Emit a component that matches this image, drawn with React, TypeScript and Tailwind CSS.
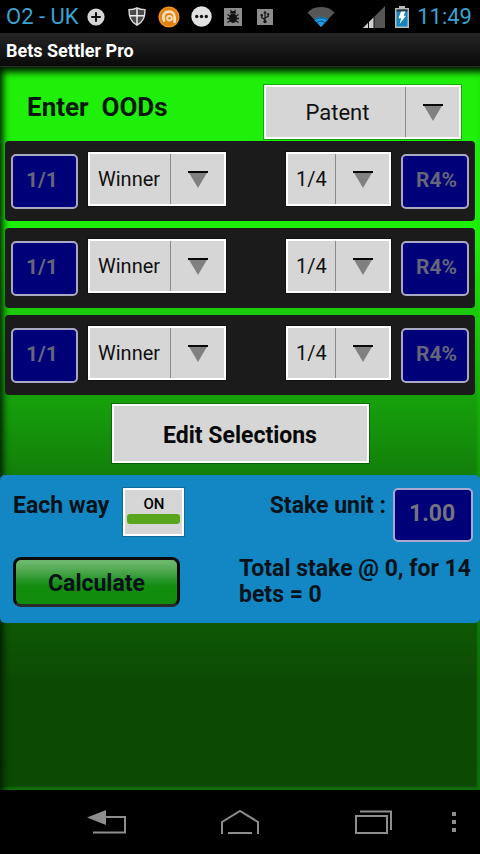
import {useState} from "react";
import clsx from "clsx";

function StatusIcons() {
    return (
        <div className="flex items-center">
            <svg className="mr-4 size-[18px]" viewBox="0 0 18 18">
                <circle cx="9" cy="9" r="8.6" fill="#d6d6d6"/>
                <path d="M9 4.2v9.6M4.2 9h9.6" stroke="#111" strokeWidth="2"/>
            </svg>
            <div className="flex w-8 justify-center">
                <svg className="h-[19px] w-[18px]" viewBox="0 0 18 19">
                    <path d="M1 2.6C4 2.6 7 2 9 .8c2 1.2 5 1.8 8 1.8 0 7.4-1.5 12-8 15.6C2.5 14.6 1 10 1 2.600Z" fill="#4a4a4a" stroke="#dcdcdc" strokeWidth="1.4"/>
                    <path d="M9 1.5v16.2M1.5 8.800h15" stroke="#efefef" strokeWidth="1.5"/>
                </svg>
            </div>
            <div className="flex w-8 justify-center">
                <svg className="size-[22px]" viewBox="0 0 22 22">
                    <circle cx="11" cy="11" r="10.6" fill="#e0800f"/>
                    <circle cx="11" cy="11" r="9.6" fill="none" stroke="#f09a2c" strokeWidth="1"/>
                    <path d="M6 14.5C4 9.500 6.500 5.600 11 5.600c3.600 0 5.600 2.500 5.600 5.600v4.600" fill="none" stroke="#f7dcb8" strokeWidth="2.800" strokeLinecap="round"/>
                    <circle cx="11.500" cy="12.300" r="2.300" fill="none" stroke="#f7dcb8" strokeWidth="2"/>
                </svg>
            </div>
            <div className="flex w-8 justify-center">
                <svg className="size-[21px]" viewBox="0 0 21 21">
                    <circle cx="10.5" cy="10.5" r="10.2" fill="#e2e2e2"/>
                    <circle cx="5.7" cy="10.5" r="1.7" fill="#151515"/>
                    <circle cx="10.5" cy="10.5" r="1.7" fill="#151515"/>
                    <circle cx="15.3" cy="10.5" r="1.7" fill="#151515"/>
                </svg>
            </div>
            <div className="flex w-8 justify-center">
                <svg className="size-[18px]" viewBox="0 0 18 18">
                    <rect width="18" height="18" fill="#8c8c8c"/>
                    <ellipse cx="9" cy="10.300" rx="4" ry="4.700" fill="#141414"/>
                    <path d="M5.800 5.600a3.200 2.600 0 0 1 6.400 0Z" fill="#141414"/>
                    <path d="M3.500 6.500l3 1.800M3 10.500h12M3.500 14.500l3-2M14.500 6.500l-3 1.800M14.500 14.500l-3-2M6.500 2.200l1.200 1.800M11.500 2.200l-1.200 1.800" stroke="#141414" strokeWidth="1.300"/>
                </svg>
            </div>
            <div className="flex w-8 justify-center">
                <svg className="size-4" viewBox="0 0 16 16">
                    <rect width="16" height="16" fill="#8c8c8c"/>
                    <path d="M8 3v9M8 10.500L4.800 8.800V6.500M8 9l3.200-1.700V5.200" fill="none" stroke="#141414" strokeWidth="1.200"/>
                    <path d="M6.300 4.200L8 1.800l1.700 2.400Z" fill="#141414"/>
                    <circle cx="8" cy="12.600" r="1.700" fill="#141414"/>
                    <circle cx="4.800" cy="6.300" r="1.200" fill="#141414"/>
                    <rect x="10.200" y="4.200" width="2" height="2" fill="#141414"/>
                </svg>
            </div>
        </div>
    );
}

function StatusBar() {
    return (
        <div className="flex h-[33px] items-center bg-black pr-2 pl-1.5 text-[22px] text-[#3aa3d1]">
            <span className="w-[81px]">O2 - UK</span>
            <StatusIcons/>
            <div className="ml-auto flex items-center">
                <svg className="mr-7 h-[22px] w-7" viewBox="0 0 28 22">
                    <path d="M14 21L.5 6.5C8-.7 20-.7 27.500 6.500Z" fill="#565656"/>
                    <path d="M14 21L7 13.400c4-3.600 10-3.600 14 0Z" fill="#1c9be0"/>
                    <path d="M7.500 14.200c4-3.300 9-3.300 13 0M9.800 16.800c2.600-2.200 5.800-2.200 8.400 0" fill="none" stroke="#0c4c78" strokeWidth="1"/>
                </svg>
                <svg className="mr-2.5 size-[22px]" viewBox="0 0 22 22">
                    <path d="M22 0v22H0Z" fill="#565656"/>
                    <path d="M11 11v11H0Z" fill="#cfcfcf"/>
                    <path d="M5.500 15v7M11 10v12" stroke="#111" strokeWidth="1"/>
                </svg>
                <svg className="mr-2 h-[22px] w-3.5" viewBox="0 0 14 22">
                    <path d="M4 0h6v2h4v20H0V2h4Z" fill="#b9b9b9"/>
                    <path d="M1.500 3.500h11v17h-11Z" fill="#1583bd"/>
                    <path d="M1.500 3.500h11v2h-11Z" fill="#333"/>
                    <path d="M6 5.500h4.500L8.600 9.800H11L4.600 18l1.500-5.700H3.500Z" fill="#fff"/>
                </svg>
                <span>11:49</span>
            </div>
        </div>
    );
}

type DropdownProps = {
    label: string;
    options: string[];
    className: string;
    center?: boolean;
};

function Dropdown({label, options, className, center}: DropdownProps) {
    return (
        <div className={clsx("relative flex h-[54px] border-2 border-white bg-[#d6d6d6] pr-[54px] outline outline-black/30", className)}>
            <select
                aria-label={label}
                className={clsx("w-full appearance-none overflow-hidden bg-transparent text-[#101010]", center ? "pl-1 text-center text-[22px]" : "pl-2 text-xl")}
            >
                {options.map((option) => (
                    <option key={option}>{option}</option>
                ))}
            </select>
            <div className="pointer-events-none absolute inset-y-0 right-0 flex w-[54px] items-center justify-center border-l border-[#8a8a8a]">
                <svg className="h-[17px] w-5" viewBox="0 0 20 17">
                    <path d="M0 0h20L10 17Z" fill="#808080"/>
                    <path d="M0 0h20v2H0Z" fill="#080808"/>
                </svg>
            </div>
        </div>
    );
}

function OddsInput({label, value, className}: { label: string; value: string; className: string }) {
    return (
        <input
            aria-label={label}
            defaultValue={value}
            className={clsx("mt-0.5 h-[55px] rounded-[5px] border-2 border-[#a9a9c4] bg-[#000078] pb-1 font-bold text-[#65657c]", className)}
        />
    );
}

function SelectionRow({index}: { index: number }) {
    return (
        <div className="flex h-20 items-start gap-2.5 rounded-[4px] bg-[#1b1b1b] px-1.5 pt-[11px]">
            <OddsInput label={`Odds ${index}`} value="1/1" className="w-[67px] pl-[13px] text-[21px]"/>
            <Dropdown label={`Result ${index}`} options={["Winner", "Placed", "Loser"]} className="w-[138px]"/>
            <Dropdown label={`Place terms ${index}`} options={["1/4", "1/5"]} className="ml-auto w-[105px]"/>
            <OddsInput label={`Rule 4 ${index}`} value="R4%" className="w-[68px] pl-[13px] text-[21px]"/>
        </div>
    );
}

function StakePanel() {
    const [eachWay, setEachWay] = useState(true);

    return (
        <section className="rounded-[5px] bg-[#1287c3] pt-[13px] pr-[7px] pb-[15px] pl-[13px] text-[23px] font-bold text-[#06121a]">
            <div className="flex items-start">
                <span id="each-way" className="leading-9">Each way</span>
                <button
                    type="button"
                    role="switch"
                    aria-checked={eachWay}
                    aria-labelledby="each-way"
                    onClick={() => setEachWay(!eachWay)}
                    className="ml-3.5 flex h-12 w-[61px] flex-col items-center border-2 border-white bg-[#d6d6d6] px-0.5 pt-1 text-[15px] leading-5 font-medium text-black outline outline-black/20"
                >
                    {eachWay ? "ON" : "OFF"}
                    <span className={clsx("h-2.5 w-full rounded-[3px]", eachWay ? "bg-[#5aa51e]" : "bg-[#888]")}/>
                </button>
                <label htmlFor="stake" className="ml-auto leading-9">Stake unit :</label>
                <input
                    id="stake"
                    defaultValue="1.00"
                    className="ml-[7px] h-[54px] w-20 rounded-[5px] border-2 border-[#a9a9d0] bg-[#000078] pb-1 pl-3.5 text-[#74747f]"
                />
            </div>
            <div className="mt-[14px] flex items-center justify-between">
                <button
                    type="button"
                    className="h-[50px] w-[167px] rounded-[8px] border-[3px] border-[#0a0a0a] border-b-[#2a2a2a] bg-linear-to-b from-[#6cb86c] from-5% via-[#27962a] via-45% to-[#128c0c] to-60% pt-1"
                >
                    Calculate
                </button>
                <p className="w-[234px] leading-[26px]">Total stake @ 0, for 14 bets = 0</p>
            </div>
        </section>
    );
}

function NavBar() {
    return (
        <nav className="flex h-16 items-center justify-between bg-black pr-6 pl-[87px]">
            <div className="flex items-center gap-[93px]">
                <button type="button" aria-label="Back">
                    <svg className="h-6 w-10" viewBox="0 0 40 24" fill="none" stroke="#8e8e8e" strokeWidth="2">
                        <path d="M18 7h20v15.500H6"/>
                        <path d="M0 7.500L19 0v15Z" fill="#8e8e8e" stroke="none"/>
                    </svg>
                </button>
                <button type="button" aria-label="Home">
                    <svg className="h-6 w-10" viewBox="0 0 40 24" fill="none" stroke="#8e8e8e" strokeWidth="2">
                        <path d="M2 24V12L20 1l18 11v12M8 23h24"/>
                    </svg>
                </button>
                <button type="button" aria-label="Recent apps">
                    <svg className="h-6 w-10" viewBox="0 0 40 24" fill="none" stroke="#8e8e8e" strokeWidth="2">
                        <path d="M3 6h31v17H3ZM7 1.500h31V20"/>
                    </svg>
                </button>
            </div>
            <button type="button" aria-label="Menu">
                <svg className="h-5 w-1" viewBox="0 0 4 20" fill="#8e8e8e">
                    <path d="M0 0h4v4H0ZM0 8h4v4H0ZM0 16h4v4H0Z"/>
                </svg>
            </button>
        </nav>
    );
}

export default function App() {
    return (
        <div className="flex min-h-screen flex-col bg-black font-['Roboto',sans-serif]">
            <StatusBar/>
            <header className="h-[34px] border-b border-[#2c2c2c] bg-linear-to-b from-[#262626] to-[#0a0a0a] pl-1.5">
                <h1 className="text-lg leading-9 font-bold text-white">Bets Settler Pro</h1>
            </header>

            <main className="flex-1 bg-linear-to-b from-[#1ff00a] from-23% via-[#12800a] via-56% to-[#0c4a04] to-85% shadow-[inset_8px_10px_7px_-5px_#001a00,inset_-3px_-3px_2px_rgba(30,220,10,0.25)]">
                <div className="flex h-[74px] items-start justify-between pt-[18px] pr-[19px] pl-[27px]">
                    <h2 className="text-[26px] leading-[44px] font-bold whitespace-pre text-[#06180a]">Enter  OODs</h2>
                    <Dropdown label="Bet type" options={["Patent", "Trixie", "Yankee"]} className="w-[197px]" center/>
                </div>

                <div className="flex flex-col gap-[7px] px-[5px]">
                    <SelectionRow index={1}/>
                    <SelectionRow index={2}/>
                    <SelectionRow index={3}/>
                </div>

                <div className="flex justify-center pt-[9px] pb-3">
                    <button
                        type="button"
                        className="h-[59px] w-[257px] border-2 border-white bg-[#d6d6d6] pt-1.5 text-[23px] font-bold text-[#080808] outline outline-black/30"
                    >
                        Edit Selections
                    </button>
                </div>

                <StakePanel/>
            </main>

            <NavBar/>
        </div>
    );
}
